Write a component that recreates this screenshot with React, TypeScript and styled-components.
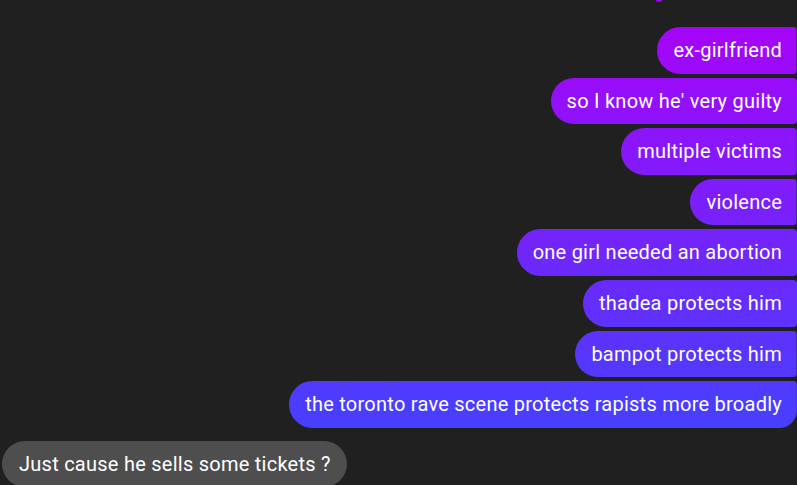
import React from "react";
import styled, { createGlobalStyle, css } from "styled-components";

const Global = createGlobalStyle`
  html, body {
    margin: 0;
    padding: 0;
    background: #202020;
    overflow: hidden;
  }
  body {
    font-family: Roboto, "Noto Sans", "Liberation Sans", sans-serif;
  }
`;

const Screen = styled.div`
  width: 797px;
  height: 485px;
  background: #202020;
  display: flex;
  flex-direction: column;
  overflow: hidden;
`;

const TopStrip = styled.div`
  height: 27px;
  display: flex;
  justify-content: flex-end;
  padding-right: 134px;
  flex-shrink: 0;
`;

const SeenDot = styled.div`
  width: 8px;
  height: 8px;
  margin-top: -6px;
  border-radius: 50%;
  background: #a000f0;
`;

const Group = styled.div<{ $side: "me" | "them" }>`
  display: flex;
  flex-direction: column;
  align-items: ${(p) => (p.$side === "me" ? "flex-end" : "flex-start")};
  gap: 4px;
  padding: ${(p) => (p.$side === "me" ? "0" : "13px 0 0 2px")};
`;

const Bubble = styled.div<{ $side: "me" | "them"; $last?: boolean }>`
  font-size: 20px;
  letter-spacing: 0.25px;
  line-height: 22.6px;
  padding: 12px 15px 12px 16px;
  color: #ffffff;
  white-space: nowrap;
  ${(p) =>
    p.$side === "me"
      ? css`
          background: linear-gradient(180deg, #ac00f9 0px, #3849fe 485px);
          background-attachment: fixed;
          border-radius: 24px 4px ${p.$last ? "18px" : "4px"} 24px;
        `
      : css`
          background: #4e4e4e;
          border-radius: 24px;
          padding: 12px 16px 12px 17px;
        `}
`;

const mine = [
  "ex-girlfriend",
  "so I know he' very guilty",
  "multiple victims",
  "violence",
  "one girl needed an abortion",
  "thadea protects him",
  "bampot protects him",
  "the toronto rave scene protects rapists more broadly",
];

export default function App() {
  return (
    <>
      <Global />
      <Screen>
        <TopStrip>
          <SeenDot />
        </TopStrip>
        <Group $side="me">
          {mine.map((m, i) => (
            <Bubble key={i} $side="me" $last={i === mine.length - 1}>
              {m}
            </Bubble>
          ))}
        </Group>
        <Group $side="them">
          <Bubble $side="them">Just cause he sells some tickets ?</Bubble>
        </Group>
      </Screen>
    </>
  );
}
